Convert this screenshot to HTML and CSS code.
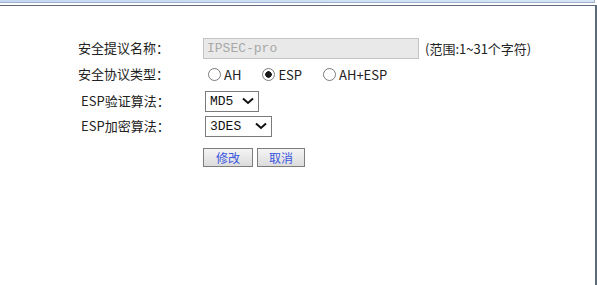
FILE: index.html
```html
<!DOCTYPE html>
<html lang="zh-CN">
<head>
<meta charset="UTF-8">
<title>安全提议</title>
<link rel="stylesheet" href="styles.css">
</head>
<body>
<div class="topbar"></div>
<div class="panel">
    <form class="form" id="proposalForm">
        <div class="row row-name">
            <label class="label" for="propName">安全提议名称：</label>
            <div class="field">
                <input class="text-input" type="text" id="propName" value="IPSEC-pro" disabled>
                <span class="hint">(范围:1~31个字符)</span>
            </div>
        </div>
        <div class="row row-proto">
            <span class="label">安全协议类型：</span>
            <div class="field radios">
                <label class="radio"><input type="radio" name="proto" value="ah">AH</label>
                <label class="radio"><input type="radio" name="proto" value="esp" checked>ESP</label>
                <label class="radio"><input type="radio" name="proto" value="ahesp">AH+ESP</label>
            </div>
        </div>
        <div class="row row-auth">
            <label class="label label-esp" for="espAuth">ESP验证算法：</label>
            <div class="field">
                <span class="select-wrap select-auth">
                    <select class="select" id="espAuth">
                        <option>MD5</option>
                        <option>SHA1</option>
                    </select>
                    <svg class="chevron" width="12" height="8" viewBox="0 0 12 8"><path d="M1 1.5 L6 6 L11 1.5" fill="none" stroke="#111" stroke-width="2"/></svg>
                </span>
            </div>
        </div>
        <div class="row row-enc">
            <label class="label label-esp" for="espEnc">ESP加密算法：</label>
            <div class="field">
                <span class="select-wrap select-enc">
                    <select class="select" id="espEnc">
                        <option>3DES</option>
                        <option>DES</option>
                        <option>AES128</option>
                    </select>
                    <svg class="chevron" width="12" height="8" viewBox="0 0 12 8"><path d="M1 1.5 L6 6 L11 1.5" fill="none" stroke="#111" stroke-width="2"/></svg>
                </span>
            </div>
        </div>
        <div class="row row-buttons">
            <span class="label"></span>
            <div class="field buttons">
                <button type="submit" class="btn">修改</button>
                <button type="button" class="btn">取消</button>
            </div>
        </div>
    </form>
</div>
</body>
</html>
```
FILE: styles.css
```css
html, body {
    height: 100%;
}
body {
    margin: 0;
    background: #fff;
    font-family: "Noto Sans CJK SC", "Noto Sans", sans-serif;
    font-size: 13px;
    color: #222;
    overflow: hidden;
}
.topbar {
    width: 594px;
    height: 2px;
    background: linear-gradient(to right, #c3d9f3, #d6e6f8);
    border-bottom: 1px solid #9fb2c8;
    border-right: 1px solid #9fb2c8;
}
.panel {
    box-sizing: border-box;
    width: 597px;
    height: calc(100% - 5px);
    margin-top: 2px;
    border-top: 1px solid #5c6a79;
    border-right: 2px solid #5c6a79;
}
.form {
    padding: 31px 0 0 78px;
}
.row {
    display: flex;
    align-items: center;
}
.row-name { height: 22px; }
.row-proto { height: 30px; }
.row-auth { height: 24px; }
.row-enc { height: 26px; }
.row-buttons { margin-top: 9px; height: 19px; }
.label {
    width: 125px;
    flex: none;
    line-height: 16px;
}
.label-esp {
    padding-left: 3px;
    width: 122px;
}
.field {
    display: flex;
    align-items: center;
}
.text-input {
    box-sizing: border-box;
    width: 216px;
    height: 21px;
    margin: 0;
    padding: 1px 3px;
    border: 1px solid #c4c4c4;
    background: #e9e9e9;
    color: #a8a8a8;
    font-family: "Liberation Mono", monospace;
    font-size: 13px;
}
.hint {
    margin-left: 6px;
    color: #222;
}
.radios {
    gap: 0;
}
.radio {
    display: flex;
    align-items: center;
    margin-right: 21px;
    margin-left: 5px;
}
.radio:nth-child(2) {
    margin-left: 0;
}
.radio:nth-child(3) {
    margin-left: 0;
}
.radio input {
    appearance: none;
    box-sizing: border-box;
    width: 13px;
    height: 13px;
    margin: 0 3px 0 0;
    border: 1px solid #7b7b7b;
    border-radius: 50%;
    background: #fff;
}
.radio input:checked {
    background: radial-gradient(circle, #1a1a1a 0 3px, #fff 3.5px);
}
.select-wrap {
    position: relative;
    display: inline-block;
    margin-left: 2px;
}
.select {
    appearance: none;
    box-sizing: border-box;
    height: 21px;
    margin: 0;
    padding: 0 0 0 4px;
    border: 1px solid #7a7a7a;
    border-radius: 0;
    background: #fff;
    color: #111;
    font-family: "Liberation Mono", monospace;
    font-size: 13px;
}
.select-auth .select { width: 54px; }
.select-enc .select { width: 67px; }
.chevron {
    position: absolute;
    right: 5px;
    top: 7px;
    pointer-events: none;
}
.buttons {
    gap: 4px;
}
.btn {
    box-sizing: border-box;
    width: 50px;
    height: 19px;
    margin: 0;
    padding: 0;
    border: 1px solid #7d7d7d;
    background: linear-gradient(#f4f4f4, #dcdcdc);
    color: #3a57e0;
    font-family: "Noto Sans CJK SC", sans-serif;
    font-size: 12px;
    line-height: 17px;
    cursor: pointer;
}
.btn + .btn {
    width: 48px;
}
```
